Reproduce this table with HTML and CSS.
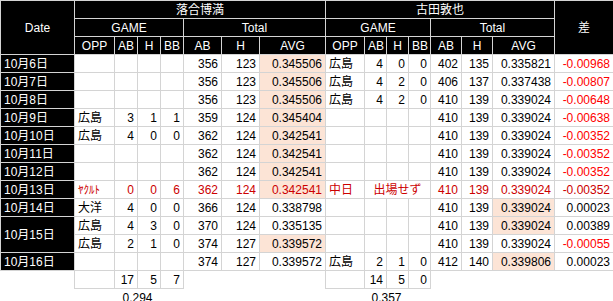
FILE: index.html
```html
<!DOCTYPE html>
<html lang="ja">
<head>
<meta charset="utf-8">
<link rel="stylesheet" href="styles.css">
</head>
<body>
<table class="grid">
  <colgroup>
    <col class="c74"><col class="c40"><col class="c23"><col class="c23"><col class="c23"><col class="c38"><col class="c38"><col class="c66">
    <col class="c39"><col class="c22"><col class="c22"><col class="c22"><col class="c31"><col class="c31"><col class="c62"><col class="c59">
  </colgroup>
  <thead>
    <tr>
      <th class="h" rowspan="3">Date</th>
      <th class="h" colspan="7">落合博満</th>
      <th class="h" colspan="7">古田敦也</th>
      <th class="h" rowspan="3">差</th>
    </tr>
    <tr>
      <th class="h" colspan="4">GAME</th>
      <th class="h" colspan="3">Total</th>
      <th class="h" colspan="4">GAME</th>
      <th class="h" colspan="3">Total</th>
    </tr>
    <tr>
      <th class="h">OPP</th><th class="h">AB</th><th class="h">H</th><th class="h">BB</th>
      <th class="h">AB</th><th class="h">H</th><th class="h">AVG</th>
      <th class="h">OPP</th><th class="h">AB</th><th class="h">H</th><th class="h">BB</th>
      <th class="h">AB</th><th class="h">H</th><th class="h">AVG</th>
    </tr>
  </thead>
  <tbody>
    <tr>
      <td class="d">10月6日</td>
      <td></td><td></td><td></td><td></td>
      <td class="n">356</td><td class="n">123</td><td class="n o">0.345506</td>
      <td class="t">広島</td><td class="n">4</td><td class="n">0</td><td class="n">0</td>
      <td class="n">402</td><td class="n">135</td><td class="n">0.335821</td>
      <td class="n neg">-0.00968</td>
    </tr>
    <tr>
      <td class="d">10月7日</td>
      <td></td><td></td><td></td><td></td>
      <td class="n">356</td><td class="n">123</td><td class="n o">0.345506</td>
      <td class="t">広島</td><td class="n">4</td><td class="n">2</td><td class="n">0</td>
      <td class="n">406</td><td class="n">137</td><td class="n">0.337438</td>
      <td class="n neg">-0.00807</td>
    </tr>
    <tr>
      <td class="d">10月8日</td>
      <td></td><td></td><td></td><td></td>
      <td class="n">356</td><td class="n">123</td><td class="n o">0.345506</td>
      <td class="t">広島</td><td class="n">4</td><td class="n">2</td><td class="n">0</td>
      <td class="n">410</td><td class="n">139</td><td class="n">0.339024</td>
      <td class="n neg">-0.00648</td>
    </tr>
    <tr>
      <td class="d">10月9日</td>
      <td class="t">広島</td><td class="n">3</td><td class="n">1</td><td class="n">1</td>
      <td class="n">359</td><td class="n">124</td><td class="n o">0.345404</td>
      <td></td><td></td><td></td><td></td>
      <td class="n">410</td><td class="n">139</td><td class="n">0.339024</td>
      <td class="n neg">-0.00638</td>
    </tr>
    <tr>
      <td class="d">10月10日</td>
      <td class="t">広島</td><td class="n">4</td><td class="n">0</td><td class="n">0</td>
      <td class="n">362</td><td class="n">124</td><td class="n o">0.342541</td>
      <td></td><td></td><td></td><td></td>
      <td class="n">410</td><td class="n">139</td><td class="n">0.339024</td>
      <td class="n neg">-0.00352</td>
    </tr>
    <tr>
      <td class="d">10月11日</td>
      <td></td><td></td><td></td><td></td>
      <td class="n">362</td><td class="n">124</td><td class="n o">0.342541</td>
      <td></td><td></td><td></td><td></td>
      <td class="n">410</td><td class="n">139</td><td class="n">0.339024</td>
      <td class="n neg">-0.00352</td>
    </tr>
    <tr>
      <td class="d">10月12日</td>
      <td></td><td></td><td></td><td></td>
      <td class="n">362</td><td class="n">124</td><td class="n o">0.342541</td>
      <td></td><td></td><td></td><td></td>
      <td class="n">410</td><td class="n">139</td><td class="n">0.339024</td>
      <td class="n neg">-0.00352</td>
    </tr>
    <tr class="red">
      <td class="d">10月13日</td>
      <td class="t kana">ﾔｸﾙﾄ</td><td class="n">0</td><td class="n">0</td><td class="n">6</td>
      <td class="n">362</td><td class="n">124</td><td class="n o">0.342541</td>
      <td class="t">中日</td><td class="c" colspan="3">出場せず</td>
      <td class="n">410</td><td class="n">139</td><td class="n">0.339024</td>
      <td class="n neg">-0.00352</td>
    </tr>
    <tr>
      <td class="d">10月14日</td>
      <td class="t">大洋</td><td class="n">4</td><td class="n">0</td><td class="n">0</td>
      <td class="n">366</td><td class="n">124</td><td class="n">0.338798</td>
      <td></td><td></td><td></td><td></td>
      <td class="n">410</td><td class="n">139</td><td class="n o">0.339024</td>
      <td class="n">0.00023</td>
    </tr>
    <tr>
      <td class="d" rowspan="2">10月15日</td>
      <td class="t">広島</td><td class="n">4</td><td class="n">3</td><td class="n">0</td>
      <td class="n">370</td><td class="n">124</td><td class="n">0.335135</td>
      <td></td><td></td><td></td><td></td>
      <td class="n">410</td><td class="n">139</td><td class="n o">0.339024</td>
      <td class="n">0.00389</td>
    </tr>
    <tr>
      <td class="t">広島</td><td class="n">2</td><td class="n">1</td><td class="n">0</td>
      <td class="n">374</td><td class="n">127</td><td class="n o">0.339572</td>
      <td></td><td></td><td></td><td></td>
      <td class="n">410</td><td class="n">139</td><td class="n">0.339024</td>
      <td class="n neg">-0.00055</td>
    </tr>
    <tr>
      <td class="d">10月16日</td>
      <td></td><td></td><td></td><td></td>
      <td class="n">374</td><td class="n">127</td><td class="n">0.339572</td>
      <td class="t">広島</td><td class="n">2</td><td class="n">1</td><td class="n">0</td>
      <td class="n">412</td><td class="n">140</td><td class="n o">0.339806</td>
      <td class="n">0.00023</td>
    </tr>
    <tr>
      <td class="nb"></td>
      <td></td><td class="n">17</td><td class="n">5</td><td class="n">7</td>
      <td class="nb"></td><td class="nb"></td><td class="nb"></td>
      <td></td><td class="n">14</td><td class="n">5</td><td class="n">0</td>
      <td class="nb"></td><td class="nb"></td><td class="nb"></td><td class="nb"></td>
    </tr>
    <tr>
      <td class="nb"></td><td class="nb"></td>
      <td class="nb c" colspan="2">0.294</td>
      <td class="nb"></td><td class="nb"></td><td class="nb"></td><td class="nb"></td><td class="nb"></td>
      <td class="nb c" colspan="2">0.357</td>
      <td class="nb"></td><td class="nb"></td><td class="nb"></td><td class="nb"></td><td class="nb"></td>
    </tr>
  </tbody>
</table>
</body>
</html>
```

FILE: styles.css
```css
html, body {
  margin: 0;
  padding: 0;
  background: #ffffff;
}

.grid {
  border-collapse: collapse;
  table-layout: fixed;
  width: 613px;
  font-family: "Liberation Sans", Arial, "Noto Sans CJK JP", sans-serif;
  font-size: 12px;
  color: #000000;
}

.c74 { width: 74px; }
.c40 { width: 40px; }
.c23 { width: 23px; }
.c38 { width: 38px; }
.c66 { width: 66px; }
.c39 { width: 39px; }
.c22 { width: 22px; }
.c31 { width: 31px; }
.c62 { width: 62px; }
.c59 { width: 59px; }

.grid tr {
  height: 18px;
}

.grid th,
.grid td {
  border: 1px solid #d4d4d4;
  padding: 0 3px;
  height: 17px;
  line-height: 16px;
  white-space: nowrap;
  overflow: hidden;
  vertical-align: middle;
}

.grid th {
  font-weight: normal;
  text-align: center;
}

.h {
  background: #000000;
  color: #ffffff;
  border-color: #d9d9d9;
}

.d {
  background: #000000;
  color: #ffffff;
  text-align: left;
  border-color: #d9d9d9;
}

.n {
  text-align: right;
}

.t {
  text-align: left;
  padding-left: 2px;
}

.c {
  text-align: center;
}

.o {
  background: #fce4d6;
}

.red td:not(.d) {
  color: #cc0000;
}

.kana {
  font-size: 11px;
}

.red .neg,
.neg {
  color: #ff0000;
}

.grid .nb {
  border: none;
}
```
